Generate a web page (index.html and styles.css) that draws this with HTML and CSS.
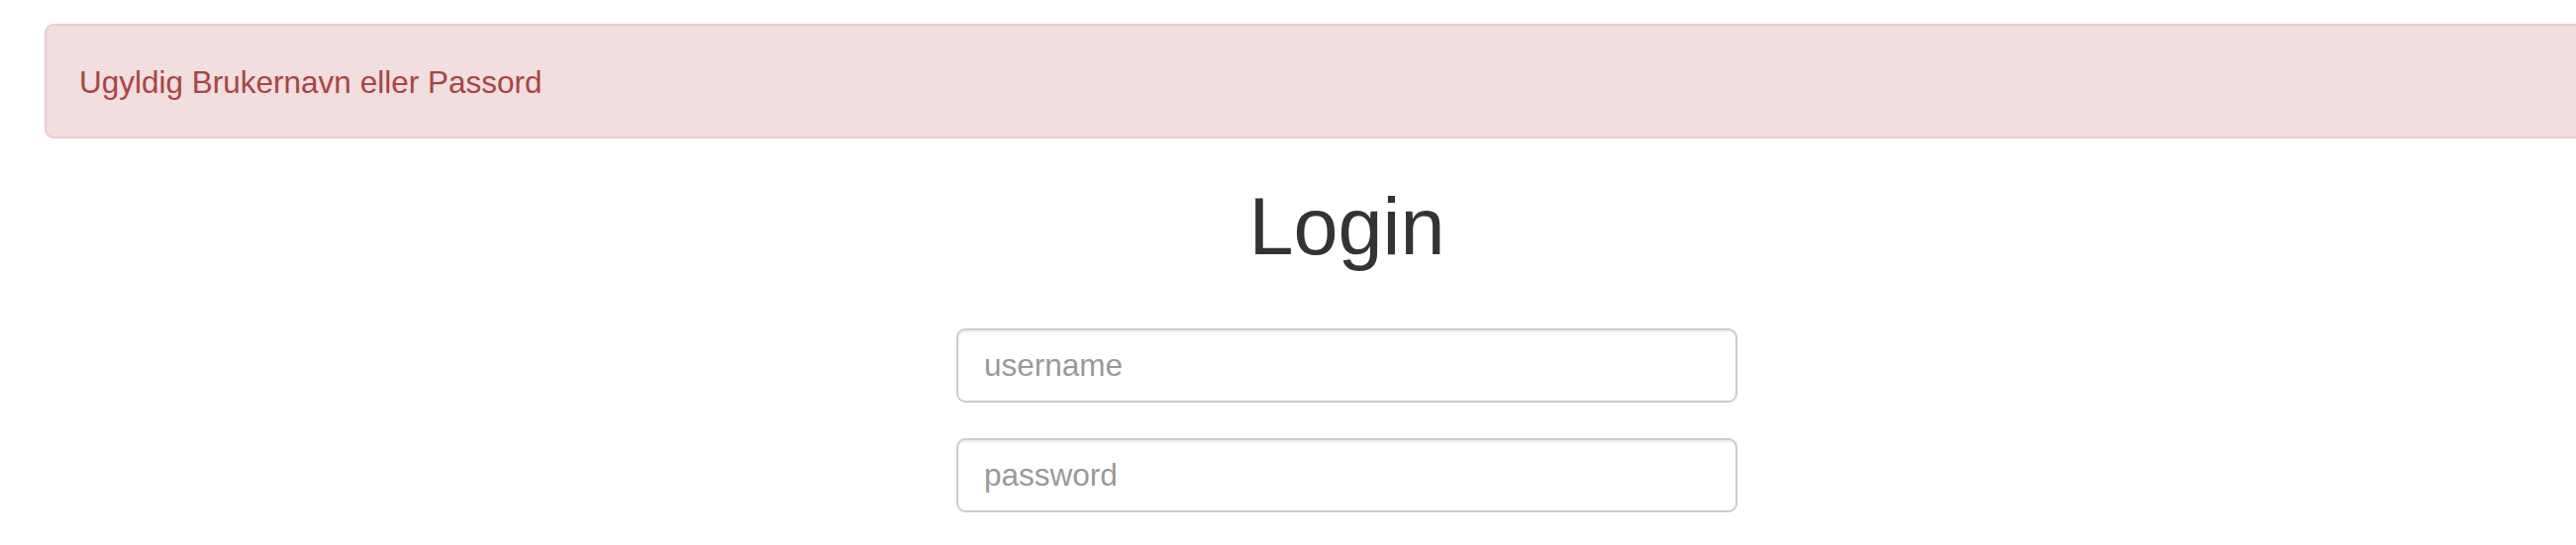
FILE: index.html
```html
<!DOCTYPE html>
<html lang="no">
<head>
<meta charset="utf-8">
<title>Login</title>
<link rel="stylesheet" href="styles.css">
</head>
<body>
<div class="page">
  <div class="alert">Ugyldig Brukernavn eller Passord</div>
  <h1 class="title">Login</h1>
  <form class="login-form">
    <input class="field" type="text" placeholder="username">
    <input class="field" type="password" placeholder="password">
  </form>
</div>
</body>
</html>
```
FILE: styles.css
```css
html {
  overflow: hidden;
}
body {
  margin: 0;
  background: #fff;
  font-family: "Liberation Sans", Arial, sans-serif;
  color: #333;
}
.page {
  width: 2631px;
  padding: 24px 0 0 45px;
}
.alert {
  box-sizing: border-box;
  width: 2631px;
  height: 116px;
  padding: 34px 33px 32px;
  background: #f2dede;
  border: 2px solid #ebccd1;
  border-radius: 9px;
  color: #a94442;
  font-size: 31.5px;
  line-height: 46px;
}
.title {
  margin: 45px 0 58px;
  text-align: center;
  font-size: 81px;
  font-weight: 500;
  line-height: 89px;
  color: #333;
}
.login-form {
  display: flex;
  flex-direction: column;
  align-items: center;
  gap: 36px;
  margin: 0;
}
.field {
  box-sizing: border-box;
  width: 789px;
  height: 75px;
  padding: 0 26px;
  border: 2px solid #ccc;
  border-radius: 9px;
  box-shadow: inset 0 2px 2px rgba(0, 0, 0, 0.075);
  background: #fff;
  font-family: "Liberation Sans", Arial, sans-serif;
  font-size: 31.5px;
  color: #555;
  outline: none;
}
.field::placeholder {
  color: #999;
  opacity: 1;
}
```
